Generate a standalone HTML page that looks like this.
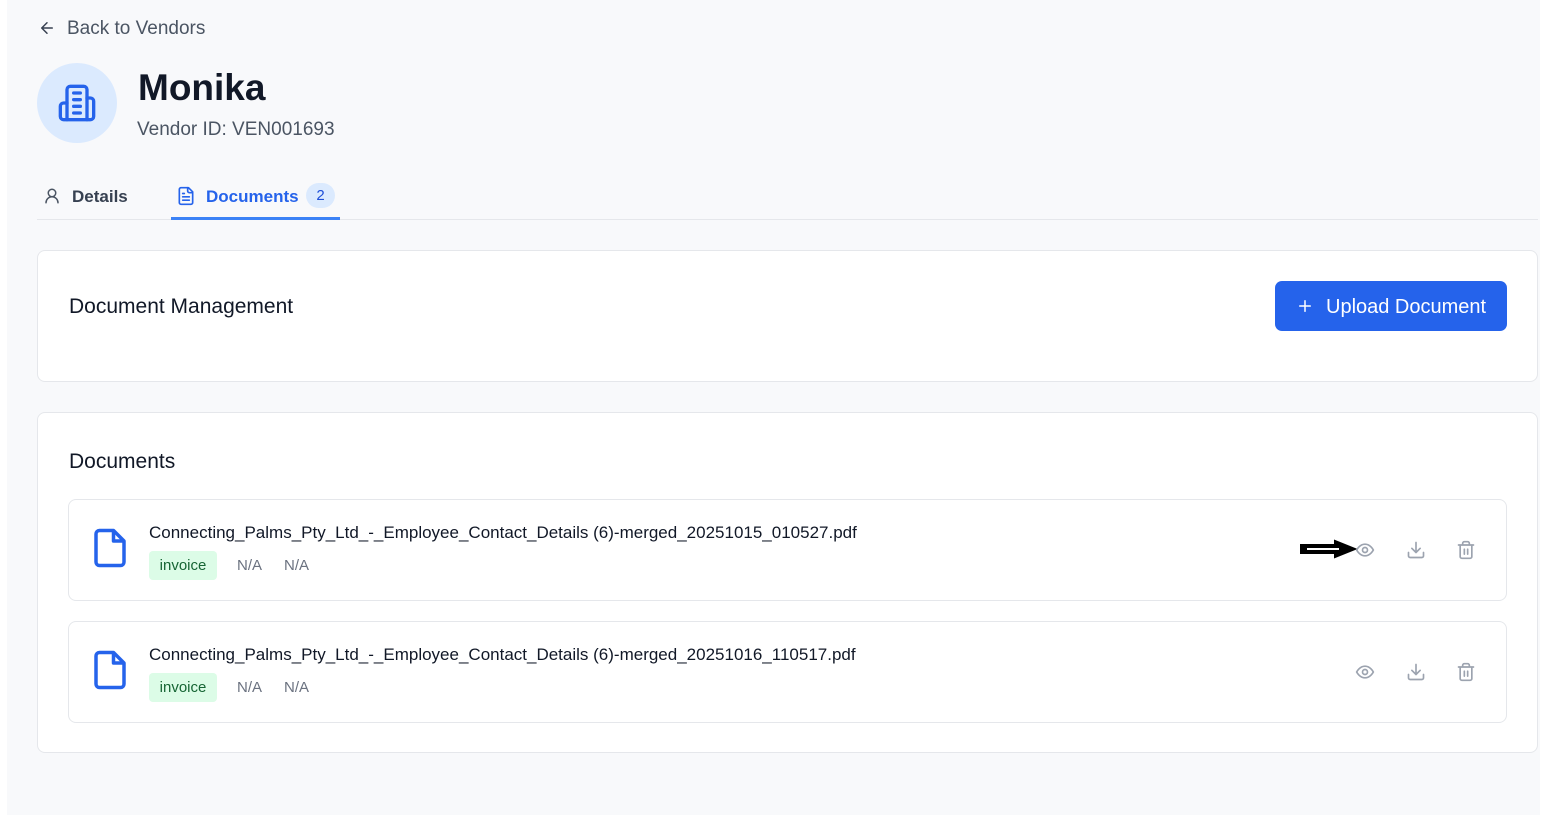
<!DOCTYPE html>
<html><head><meta charset="utf-8"><style>
*{box-sizing:border-box;margin:0;padding:0}
body{width:1542px;height:815px;background:#fff;font-family:"Liberation Sans",sans-serif;color:#111827;position:relative;overflow:hidden}
.bg{position:absolute;left:7px;top:0;width:1533px;height:815px;background:#f8f9fb}
.abs{position:absolute}
.card{position:absolute;background:#fff;border:1px solid #e5e7eb;border-radius:8px}
.row{position:absolute;left:30px;width:1439px;height:102px;border:1px solid #e5e7eb;border-radius:8px;background:#fff}
.fn{position:absolute;left:80px;top:23px;font-size:17px;color:#111827;letter-spacing:0}
.tag{position:absolute;left:80px;top:51px;width:68px;height:29px;background:#dcfce7;color:#166534;border-radius:4px;font-size:15px;text-align:center;line-height:29px}
.na{position:absolute;top:57px;font-size:15px;color:#6b7280}
</style></head><body>
<div class="bg"></div>
<svg class="abs" style="left:38px;top:19px" width="18" height="18" viewBox="0 0 24 24" fill="none" stroke="#374151" stroke-width="2" stroke-linecap="round" stroke-linejoin="round"><path d="M19 12H5M12 19l-7-7 7-7"/></svg>
<div class="abs" style="left:67px;top:18px;font-size:19px;color:#4b5563">Back to Vendors</div>
<div class="abs" style="left:37px;top:63px;width:80px;height:80px;border-radius:50%;background:#dbeafe"></div>
<svg class="abs" style="left:57px;top:83px" width="40" height="40" viewBox="0 0 24 24" fill="none" stroke="#2563eb" stroke-width="2" stroke-linecap="round" stroke-linejoin="round"><path d="M6 22V4a2 2 0 0 1 2-2h8a2 2 0 0 1 2 2v18Z"/><path d="M6 12H4a2 2 0 0 0-2 2v6a2 2 0 0 0 2 2h2"/><path d="M18 9h2a2 2 0 0 1 2 2v9a2 2 0 0 1-2 2h-2"/><path d="M10 6h4M10 10h4M10 14h4M10 18h4"/></svg>
<div class="abs" style="left:138px;top:67px;font-size:37px;font-weight:bold;color:#111827">Monika</div>
<div class="abs" style="left:137px;top:119px;font-size:19px;color:#4b5563">Vendor ID: VEN001693</div>
<svg class="abs" style="left:43px;top:187px" width="18" height="18" viewBox="0 0 24 24" fill="none" stroke="#4b5563" stroke-width="2" stroke-linecap="round"><circle cx="12" cy="8" r="5"/><path d="M20 21a8 8 0 0 0-16 0"/></svg>
<div class="abs" style="left:72px;top:187px;font-size:17px;font-weight:bold;color:#374151">Details</div>
<svg class="abs" style="left:176px;top:186px" width="20" height="20" viewBox="0 0 24 24" fill="none" stroke="#2563eb" stroke-width="2" stroke-linecap="round" stroke-linejoin="round"><path d="M15 2H6a2 2 0 0 0-2 2v16a2 2 0 0 0 2 2h12a2 2 0 0 0 2-2V7Z"/><path d="M14 2v4a2 2 0 0 0 2 2h4M10 9H8M16 13H8M16 17H8"/></svg>
<div class="abs" style="left:206px;top:187px;font-size:17px;font-weight:bold;color:#2563eb">Documents</div>
<div class="abs" style="left:306px;top:183px;width:29px;height:25px;border-radius:13px;background:#dbeafe;color:#1d4ed8;font-size:15px;text-align:center;line-height:25px">2</div>
<div class="abs" style="left:37px;top:219px;width:1501px;height:1px;background:#e5e7eb"></div>
<div class="abs" style="left:171px;top:217px;width:169px;height:3px;background:#3b82f6"></div>

<div class="card" style="left:37px;top:250px;width:1501px;height:132px">
<div class="abs" style="left:31px;top:44px;font-size:21px;color:#111827">Document Management</div>
<div class="abs" style="left:1237px;top:30px;width:232px;height:50px;border-radius:7px;background:#2563eb;color:#fff;font-size:20px;line-height:52px;padding-left:51px">Upload Document</div>
<svg class="abs" style="left:1258px;top:46px" width="18" height="18" viewBox="0 0 24 24" fill="none" stroke="#fff" stroke-width="2" stroke-linecap="round"><path d="M12 5v14M5 12h14"/></svg>
</div>

<div class="card" style="left:37px;top:412px;width:1501px;height:341px">
<div class="abs" style="left:31px;top:37px;font-size:21px;color:#111827">Documents</div>
<div class="row" style="top:86px">
<svg class="abs" style="left:20px;top:27px" width="42" height="42" viewBox="0 0 24 24" fill="none" stroke="#2563eb" stroke-width="2" stroke-linejoin="round"><path d="M14 2H6a2 2 0 0 0-2 2v16a2 2 0 0 0 2 2h12a2 2 0 0 0 2-2V8Z"/><path d="M14 2v6h6"/></svg>
<div class="fn">Connecting_Palms_Pty_Ltd_-_Employee_Contact_Details (6)-merged_20251015_010527.pdf</div>
<div class="tag">invoice</div><div class="na" style="left:168px">N/A</div><div class="na" style="left:215px">N/A</div>
<svg class="abs" style="left:1230px;top:39px" width="58" height="20" viewBox="0 0 58 20"><path d="M2 6h34V2l20 8-20 8v-4H2Z" fill="#000" stroke="#000" stroke-width="2"/><path d="M8 10h32" stroke="#fff" stroke-width="2"/></svg>
<svg class="abs" style="left:1286px;top:40px" width="20" height="20" viewBox="0 0 24 24" fill="none" stroke="#9ca3af" stroke-width="2"><path d="M2 12s3.5-7 10-7 10 7 10 7-3.5 7-10 7S2 12 2 12Z"/><circle cx="12" cy="12" r="3"/></svg>
<svg class="abs" style="left:1337px;top:40px" width="20" height="20" viewBox="0 0 24 24" fill="none" stroke="#9ca3af" stroke-width="2" stroke-linecap="round" stroke-linejoin="round"><path d="M21 15v4a2 2 0 0 1-2 2H5a2 2 0 0 1-2-2v-4M7 10l5 5 5-5M12 15V3"/></svg>
<svg class="abs" style="left:1387px;top:40px" width="20" height="20" viewBox="0 0 24 24" fill="none" stroke="#9ca3af" stroke-width="2" stroke-linecap="round" stroke-linejoin="round"><path d="M3 6h18M19 6v14a2 2 0 0 1-2 2H7a2 2 0 0 1-2-2V6M8 6V4a2 2 0 0 1 2-2h4a2 2 0 0 1 2 2v2M10 11v6M14 11v6"/></svg>
</div>
<div class="row" style="top:208px">
<svg class="abs" style="left:20px;top:27px" width="42" height="42" viewBox="0 0 24 24" fill="none" stroke="#2563eb" stroke-width="2" stroke-linejoin="round"><path d="M14 2H6a2 2 0 0 0-2 2v16a2 2 0 0 0 2 2h12a2 2 0 0 0 2-2V8Z"/><path d="M14 2v6h6"/></svg>
<div class="fn">Connecting_Palms_Pty_Ltd_-_Employee_Contact_Details (6)-merged_20251016_110517.pdf</div>
<div class="tag">invoice</div><div class="na" style="left:168px">N/A</div><div class="na" style="left:215px">N/A</div>
<svg class="abs" style="left:1286px;top:40px" width="20" height="20" viewBox="0 0 24 24" fill="none" stroke="#9ca3af" stroke-width="2"><path d="M2 12s3.5-7 10-7 10 7 10 7-3.5 7-10 7S2 12 2 12Z"/><circle cx="12" cy="12" r="3"/></svg>
<svg class="abs" style="left:1337px;top:40px" width="20" height="20" viewBox="0 0 24 24" fill="none" stroke="#9ca3af" stroke-width="2" stroke-linecap="round" stroke-linejoin="round"><path d="M21 15v4a2 2 0 0 1-2 2H5a2 2 0 0 1-2-2v-4M7 10l5 5 5-5M12 15V3"/></svg>
<svg class="abs" style="left:1387px;top:40px" width="20" height="20" viewBox="0 0 24 24" fill="none" stroke="#9ca3af" stroke-width="2" stroke-linecap="round" stroke-linejoin="round"><path d="M3 6h18M19 6v14a2 2 0 0 1-2 2H7a2 2 0 0 1-2-2V6M8 6V4a2 2 0 0 1 2-2h4a2 2 0 0 1 2 2v2M10 11v6M14 11v6"/></svg>
</div>
</div>
</body></html>
